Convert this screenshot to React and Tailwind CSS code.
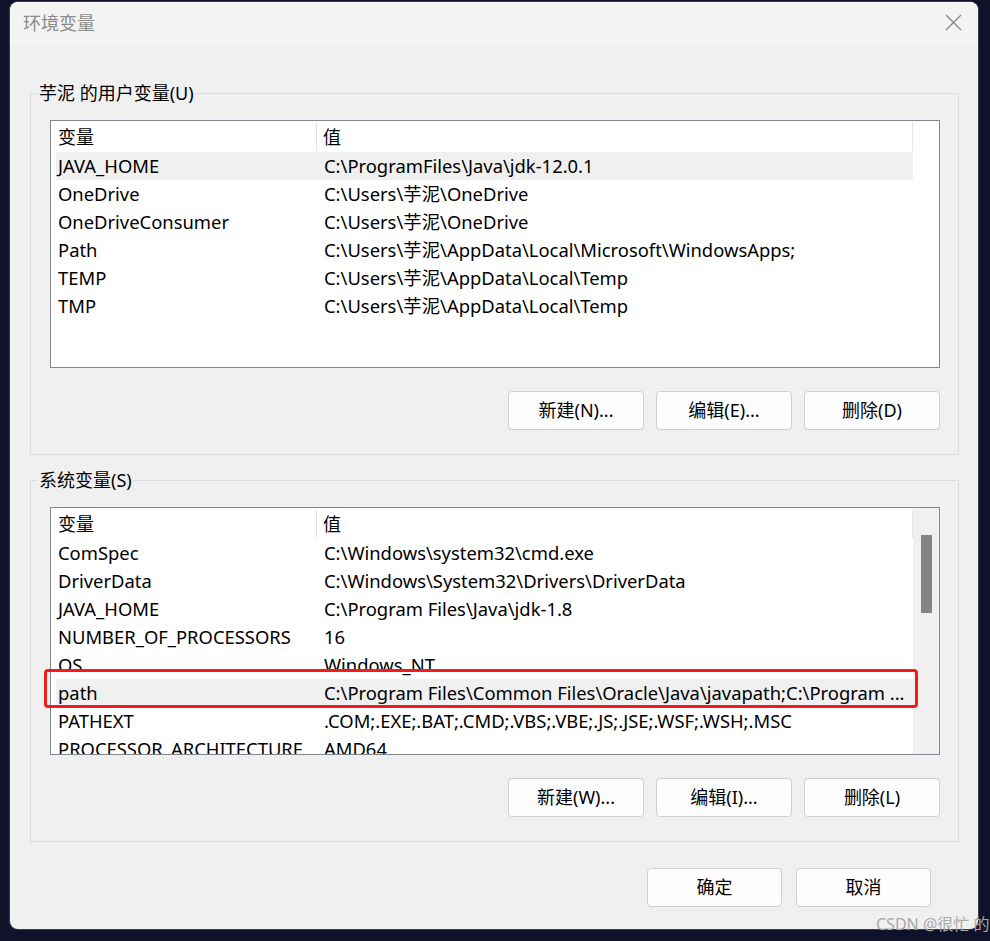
import React from 'react'

const userVars = [
    ['JAVA_HOME', 'C:\\ProgramFiles\\Java\\jdk-12.0.1'],
    ['OneDrive', 'C:\\Users\\芋泥\\OneDrive'],
    ['OneDriveConsumer', 'C:\\Users\\芋泥\\OneDrive'],
    ['Path', 'C:\\Users\\芋泥\\AppData\\Local\\Microsoft\\WindowsApps;'],
    ['TEMP', 'C:\\Users\\芋泥\\AppData\\Local\\Temp'],
    ['TMP', 'C:\\Users\\芋泥\\AppData\\Local\\Temp'],
];

const systemVars = [
    ['ComSpec', 'C:\\Windows\\system32\\cmd.exe'],
    ['DriverData', 'C:\\Windows\\System32\\Drivers\\DriverData'],
    ['JAVA_HOME', 'C:\\Program Files\\Java\\jdk-1.8'],
    ['NUMBER_OF_PROCESSORS', '16'],
    ['OS', 'Windows_NT'],
    ['path', 'C:\\Program Files\\Common Files\\Oracle\\Java\\javapath;C:\\Program ...'],
    ['PATHEXT', '.COM;.EXE;.BAT;.CMD;.VBS;.VBE;.JS;.JSE;.WSF;.WSH;.MSC'],
    ['PROCESSOR_ARCHITECTURE', 'AMD64'],
];

const Button = ({ children }) => (
    <button className="w-[136px] h-[39px] rounded-[4px] border border-[#d0d0d0] bg-[#fdfdfd] text-[18px] text-black flex items-center justify-center">
        {children}
    </button>
);

const VarList = ({ rows, selected, scroll }) => (
    <div className="w-[890px] h-[248px] border border-[#828790] bg-white flex overflow-hidden">
        <div className="w-[862px] flex flex-col">
            <div className="h-[31px] flex shrink-0 text-[18px]">
                <div className="w-[266px] pl-[7px] border-r border-[#e5e5e5] leading-[30px] my-[1px]">变量</div>
                <div className="flex-1 pl-[6px] border-r border-[#e5e5e5] leading-[30px] my-[1px]">值</div>
            </div>
            <div className="pl-[5px] flex flex-col">
                {rows.map(([name, value], i) => (
                    <div
                        key={name}
                        className={`h-[28px] shrink-0 flex leading-[28px] text-[18.4px] whitespace-nowrap ${i === selected ? 'bg-[#f0f0f0]' : ''}`}
                    >
                        <div className="w-[261px] pl-[2px] overflow-hidden">{name}</div>
                        <div className="flex-1 pl-[7px] overflow-hidden">{value}</div>
                    </div>
                ))}
            </div>
        </div>
        {scroll ? (
            <div className="w-[26px] bg-[#f0f0f0] pt-[27px] pl-[8px]">
                <div className="w-[11px] h-[78px] bg-[#858585]" />
            </div>
        ) : (
            <div className="w-[26px]" />
        )}
    </div>
);

const Group = ({ label, children }) => (
    <div className="relative border border-[#dcdcdc] pl-[19px] pr-[18px] pt-[26px] pb-[24px]">
        <span className="absolute left-[7px] top-[-13px] px-[1px] bg-[#f0f0f0] text-[18px] leading-[24px]">{label}</span>
        {children}
    </div>
);

export default function App() {
    return (
        <div className="relative w-full h-[941px] bg-[#0f1229] pl-[10px] pt-[2px] overflow-hidden font-['Noto_Sans','Noto_Sans_CJK_SC',sans-serif] text-black">
            <div className="w-[968px] h-[927px] rounded-[8px] bg-[#f0f0f0] overflow-hidden ring-1 ring-[#3a3d50] flex flex-col">
                <div className="h-[43px] bg-[#f3f3f3] flex items-center justify-between pl-[13px] pr-[16px] shrink-0">
                    <span className="text-[18px] text-[#8a8a8a]">环境变量</span>
                    <svg width="17" height="17" viewBox="0 0 17 17" className="mt-[-2px]">
                        <path d="M1 1 L16 16 M16 1 L1 16" stroke="#8a8a8a" strokeWidth="1.4" fill="none" />
                    </svg>
                </div>

                <div className="pl-[20px] pr-[19px] pt-[48px] flex flex-col">
                    <Group label="芋泥 的用户变量(U)">
                        <VarList rows={userVars} selected={0} />
                        <div className="mt-[23px] flex justify-end gap-[12px]">
                            <Button>新建(N)...</Button>
                            <Button>编辑(E)...</Button>
                            <Button>删除(D)</Button>
                        </div>
                    </Group>

                    <div className="mt-[25px]">
                        <Group label="系统变量(S)">
                            <div className="relative">
                                <VarList rows={systemVars} selected={5} scroll />
                                <div className="absolute left-[-6px] top-[162px] w-[874px] h-[39px] border-[3px] border-[#f21c1c] rounded-[4px]" />
                            </div>
                            <div className="mt-[23px] flex justify-end gap-[12px]">
                                <Button>新建(W)...</Button>
                                <Button>编辑(I)...</Button>
                                <Button>删除(L)</Button>
                            </div>
                        </Group>
                    </div>

                    <div className="mt-[26px] pr-[28px] flex justify-end gap-[14px]">
                        <button className="w-[135px] h-[39px] rounded-[4px] border border-[#d0d0d0] bg-[#fdfdfd] text-[18px]">确定</button>
                        <button className="w-[135px] h-[39px] rounded-[4px] border border-[#d0d0d0] bg-[#fdfdfd] text-[18px]">取消</button>
                    </div>
                </div>
            </div>

            <span className="absolute left-[876px] top-[913px] text-[16px] leading-[22px] text-[#a9a9a9] whitespace-nowrap">CSDN @很忙 的</span>
        </div>
    );
}
